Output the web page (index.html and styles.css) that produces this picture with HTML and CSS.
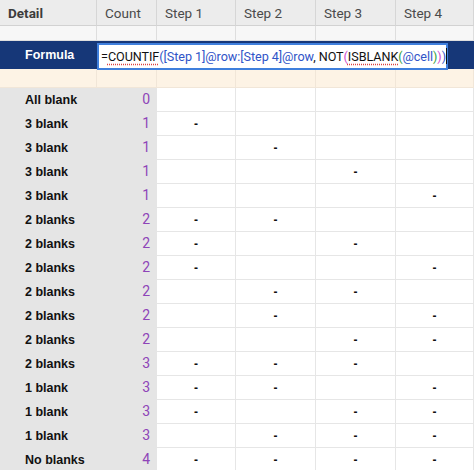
FILE: index.html
```html
<!DOCTYPE html>
<html>
<head>
<meta charset="utf-8">
<link rel="stylesheet" href="styles.css">
</head>
<body>
<div class="sheet">
  <div class="row head">
    <div class="c detail">Detail</div>
    <div class="c">Count</div>
    <div class="c">Step 1</div>
    <div class="c">Step 2</div>
    <div class="c">Step 3</div>
    <div class="c">Step 4</div>
  </div>
  <div class="row spacer">
    <div class="c"></div><div class="c"></div><div class="c"></div><div class="c"></div><div class="c"></div><div class="c"></div>
  </div>
  <div class="row formula">
    <div class="c flabel">Formula</div>
    <div class="editor"><span class="k">=<span class="err">COUNTIF</span></span><span class="ref">([Step 1]@row:[Step 4]@row</span><span class="k">, NOT</span><span class="p1">(</span><span class="k err">ISBLANK</span><span class="p2">(</span><span class="ref">@cell</span><span class="p2">)</span><span class="p1">)</span><span class="ref">)</span><span class="caret"></span></div>
  </div>
  <div class="row peach">
    <div class="c"></div><div class="c"></div><div class="c"></div><div class="c"></div><div class="c"></div><div class="c"></div>
  </div>
  <div id="data"></div>
</div>
<script src="script.js"></script>
</body>
</html>
```
FILE: script.js
```js
const rows = [
  ["All blank", 0, ""],
  ["3 blank", 1, "1"],
  ["3 blank", 1, "2"],
  ["3 blank", 1, "3"],
  ["3 blank", 1, "4"],
  ["2 blanks", 2, "12"],
  ["2 blanks", 2, "13"],
  ["2 blanks", 2, "14"],
  ["2 blanks", 2, "23"],
  ["2 blanks", 2, "24"],
  ["2 blanks", 2, "34"],
  ["2 blanks", 3, "123"],
  ["1 blank", 3, "124"],
  ["1 blank", 3, "134"],
  ["1 blank", 3, "234"],
  ["No blanks", 4, "1234"]
];
const data = document.getElementById("data");
rows.forEach(([label, count, steps]) => {
  const r = document.createElement("div");
  r.className = "row drow";
  let html = '<div class="c lbl">' + label + '</div><div class="c cnt">' + count + '</div>';
  for (let i = 1; i <= 4; i++) {
    html += '<div class="c step">' + (steps.includes(String(i)) ? '-' : '') + '</div>';
  }
  r.innerHTML = html;
  data.appendChild(r);
});
```
FILE: styles.css
```css
html, body {
  margin: 0;
  padding: 0;
  background: #fff;
}
.sheet {
  width: 474px;
  height: 470px;
  overflow: hidden;
  font-family: Roboto, "Liberation Sans", sans-serif;
}
.row {
  display: grid;
  grid-template-columns: 97px 60px 79px 80px 80px 78px;
  box-sizing: border-box;
}
.c {
  box-sizing: border-box;
  border-right: 1px solid #dedede;
  border-bottom: 1px solid #dedede;
}
.head {
  height: 26px;
  background: #ececec;
}
.head .c {
  font-size: 13.5px;
  color: #4a4a4a;
  padding: 5px 0 0 8px;
  border-right-color: #d6d6d6;
  border-bottom-color: #d2d2d2;
}
.head .detail {
  font-weight: bold;
  color: #3c3c3c;
}
.spacer {
  height: 15px;
  background: #f7f7f7;
}
.formula {
  height: 28px;
  background: #163778;
  position: relative;
}
.formula .c {
  border: none;
}
.flabel {
  color: #fff;
  font-family: "Liberation Sans", Arial, sans-serif;
  font-weight: bold;
  font-size: 12.5px;
  padding: 7px 0 0 25px;
}
.editor {
  position: absolute;
  left: 97px;
  top: 2px;
  width: 351px;
  height: 27px;
  box-sizing: border-box;
  background: #fff;
  border: 2px solid #3f7fdc;
  font-size: 12.6px;
  line-height: 21px;
  padding: 1px 0 0 2px;
  white-space: nowrap;
  letter-spacing: -0.05px;
  z-index: 2;
}
.k { color: #111; }
.ref { color: #3054c8; }
.p1 { color: #d14bd1; }
.p2 { color: #2f9e3a; }
.err {
  text-decoration: underline dotted #e04040;
  text-underline-offset: 3px;
}
.caret {
  display: inline-block;
  width: 1px;
  height: 16px;
  background: #111;
  vertical-align: -3px;
}
.peach {
  height: 19px;
  background: #fdf3e5;
}
.peach .c {
  border-color: #f1e6d8;
}
.drow {
  height: 24px;
}
.lbl, .cnt {
  background: #e5e5e5;
  border-right: none;
  border-bottom-color: #e5e5e5;
}
.lbl {
  font-family: "Liberation Sans", Arial, sans-serif;
  font-weight: bold;
  font-size: 12.5px;
  color: #111;
  padding: 5px 0 0 25px;
}
.cnt {
  color: #8e44b8;
  font-size: 14px;
  text-align: right;
  padding: 3px 7px 0 0;
}
.step {
  font-family: "Liberation Sans", Arial, sans-serif;
  font-weight: bold;
  font-size: 12px;
  text-align: center;
  padding-top: 5px;
  color: #111;
  border-color: #e6e6e6;
}
```
